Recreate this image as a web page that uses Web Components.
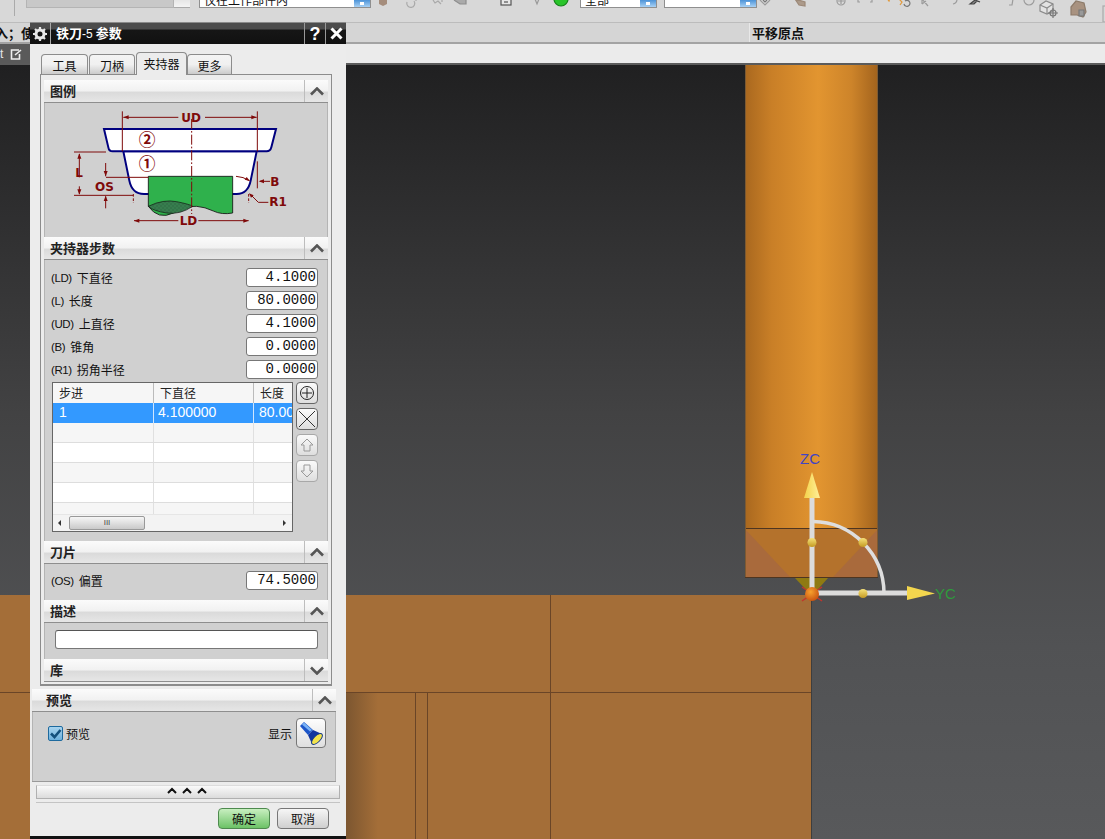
<!DOCTYPE html>
<html lang="zh">
<head>
<meta charset="utf-8">
<title>铁刀-5 参数</title>
<style>
  html, body { margin: 0; padding: 0; }
  body {
    width: 1105px; height: 839px; overflow: hidden; position: relative;
    font: 12px "Liberation Sans", "Noto Sans CJK SC", sans-serif; color: #111;
    display: flex; flex-direction: column;
  }
</style>
</head>
<body>
<cad-toolbar></cad-toolbar>
<cad-header></cad-header>
<cad-strip></cad-strip>
<cad-viewport></cad-viewport>

<tool-dialog heading="铁刀-5 参数">
  <dlg-tabs></dlg-tabs>
  <div slot="panel">
    <dlg-section heading="图例" h="134"><legend-figure></legend-figure></dlg-section>
    <dlg-section heading="夹持器步数" h="281">
      <param-row code="(LD)" name="下直径" value="4.1000"></param-row>
      <param-row code="(L)" name="长度" value="80.0000"></param-row>
      <param-row code="(UD)" name="上直径" value="4.1000"></param-row>
      <param-row code="(B)" name="锥角" value="0.0000"></param-row>
      <param-row code="(R1)" name="拐角半径" value="0.0000"></param-row>
      <step-table></step-table>
    </dlg-section>
    <dlg-section heading="刀片" h="36" pad="5">
      <param-row code="(OS)" name="偏置" value="74.5000"></param-row>
    </dlg-section>
    <dlg-section heading="描述" h="36" pad="7">
      <desc-field></desc-field>
    </dlg-section>
    <dlg-section heading="库" closed></dlg-section>
  </div>
  <dlg-section slot="preview" heading="预览" h="69" inset="14"><preview-row></preview-row></dlg-section>
</tool-dialog>

<script>
class CadToolbar extends HTMLElement {
  connectedCallback() {
    this.attachShadow({mode: 'open'}).innerHTML = `
      <style>
        :host { display: flex; flex: none; height: 22px; background: #d8d8d8; overflow: hidden; box-sizing: border-box; }
        .sep { width: 1px; height: 16px; background: #aaa; margin-left: 14px; }
        .grey { width: 148px; height: 8px; margin-left: 11px; background: #c8c8c8; border: 1px solid #b4b4b4; border-top: 0; box-sizing: border-box; }
        .greybtn { width: 16px; height: 8px; background: linear-gradient(#e6e6e6, #f4f4f4); border-bottom: 1px solid #aaa; box-sizing: border-box; margin-right: 9px; }
        .combo { height: 8px; background: #fff; border: 1px solid #8f8f8f; border-top: 0; box-sizing: border-box; display: flex; overflow: hidden; flex: none; }
        .combo span { flex: 1; font: 12px/12px "Noto Sans CJK SC", sans-serif; margin-top: -6px; padding-left: 4px; color: #111; white-space: nowrap; overflow: hidden; }
        .combo i { width: 16px; background: linear-gradient(#4c93d8, #a9d2f5); position: relative; }
        .combo i::after { content: ""; position: absolute; left: 6px; top: 2px; width: 4px; height: 3px; background: #fff; }
        svg { flex: none; display: block; }
      </style>
      <div class="sep"></div>
      <div class="grey"></div><div class="greybtn"></div>
      <div class="combo" style="width:172px"><span>仅在工作部件内</span><i></i></div>
      <svg width="209" height="22" fill="none" stroke="#a9a9a9" stroke-width="1.2">
        <path d="M8 -1h8v5l-4 2-4-2z" fill="#a58d7c" stroke="none"/>
        <path d="M36 2a4 4 0 1 0 7-1" /><path d="M45 -1v2"/>
        <path d="M62 0l2 3 3-2 3 3"/><path d="M71 -1v3"/>
        <path d="M83 0l6 4h6v-5" fill="#aaa" stroke="#8e8e8e"/>
        <rect x="130" y="-1" width="10" height="6" stroke="#555" fill="#e6e6e6"/><path d="M133 2h4" stroke="#555"/>
        <path d="M164 -1l2 5 2-5" stroke="#999"/>
        <circle cx="190" cy="-1" r="7" fill="#29c42a" stroke="#16811a"/>
      </svg>
      <div class="combo" style="width:77px"><span>全部</span><i></i></div>
      <div style="width:7px;flex:none"></div>
      <div class="combo" style="width:93px"><span></span><i></i></div>
      <svg width="348" height="22" fill="none" stroke="#9b9b9b" stroke-width="1.2">
        <path d="M3 0l5 5 5-5"/><path d="M6 0l2 2 2-2" stroke="#777"/>
        <path d="M38 -1l10 3v4l-6-1z" fill="#ac9a8a" stroke="#9c8978"/>
        <circle cx="84" cy="1" r="4"/><path d="M84 -2v6M81 1h6" />
        <path d="M101 -1v3h2M115 -1v3h-2"/>
        <path d="M131 1l2-2M131 1h2" stroke="#e29a3c"/><path d="M142 -1l3 3-2 3" stroke="#e29a3c"/><path d="M148 1a3 3 0 1 1-1 3" stroke="#777"/>
        <path d="M165 -1l6 7M165 -1v5M165 4l4-3" />
        <path d="M196 4a5 5 0 0 0 4-5"/>
        <path d="M213 4l5-4 5 2-3-1-3 3z" fill="#8c8c8c" stroke="#444"/>
        <path d="M252 5h3l1-6h3"/>
        <circle cx="272" cy="0" r="5"/>
        <path d="M283 5l6-4 7 3v7l-6 3-7-3z" fill="#e3e3e3" stroke="#8b8b8b"/><path d="M283 5l7 3 6-4M290 8v6" stroke="#8b8b8b"/>
        <circle cx="296" cy="13" r="3" stroke="#777"/><path d="M296 8v10M291 13h10" stroke="#777"/>
        <path d="M314 7l5-6 8 2 2 9-3 5-6-2-6 0z" fill="#a89280" stroke="#8d7b6a"/><path d="M322 10h5v6h-5z" fill="#999" stroke="#777"/>
        <rect x="346" y="6" width="6" height="16" stroke="#aaa"/>
      </svg>`;
  }
}
customElements.define('cad-toolbar', CadToolbar);

class CadHeader extends HTMLElement {
  connectedCallback() {
    this.attachShadow({mode: 'open'}).innerHTML = `
      <style>
        :host { display: flex; flex: none; height: 22px; background: #d5d5d5; border-top: 1px solid #bcbcbc; border-bottom: 2px solid #a3a3a3; box-sizing: border-box; font: bold 13px "Noto Sans CJK SC", sans-serif; color: #111; line-height: 19px; }
        .left { width: 750px; box-sizing: border-box; border-right: 1px solid #e8e8e8; white-space: nowrap; overflow: hidden; }
        .left span { margin-left: -5px; display: inline-block; }
        .right { padding-left: 2px; }
      </style>
      <div class="left"><span>入；使</span></div>
      <div class="right">平移原点</div>`;
  }
}
customElements.define('cad-header', CadHeader);

class CadStrip extends HTMLElement {
  connectedCallback() {
    this.attachShadow({mode: 'open'}).innerHTML = `
      <style>
        :host { display: flex; flex: none; height: 21px; background: #ebebeb; border-bottom: 2px solid #5b5b5b; box-sizing: border-box; }
        .left { width: 30px; background: #5a5a5a; color: #e6e6e6; font: 12px "Liberation Sans", sans-serif; display: flex; align-items: center; gap: 7px; }
      </style>
      <div class="left"><span>t</span><svg width="12" height="12" fill="none" stroke="#eee" stroke-width="1.6"><path d="M9 2H1.500v9h8V6"/><path d="M5 7l6-5" /></svg></div>`;
  }
}
customElements.define('cad-strip', CadStrip);

class CadViewport extends HTMLElement {
  connectedCallback() {
    // svg coordinates are page coordinates, shifted up by the 65px of bars above
    this.attachShadow({mode: 'open'}).innerHTML = `
      <style>
        :host { display: block; flex: 1; min-height: 0; overflow: hidden; }
        svg { display: block; }
        text { font-family: "Liberation Sans", sans-serif; font-size: 15px; }
      </style>
      <svg width="1105" height="774" viewBox="0 65 1105 774">
        <defs>
          <linearGradient id="bg" x1="0" y1="0" x2="0" y2="1">
            <stop offset="0" stop-color="#202021"/><stop offset=".45" stop-color="#424243"/><stop offset=".75" stop-color="#515254"/><stop offset="1" stop-color="#58595b"/>
          </linearGradient>
          <linearGradient id="cyl" x1="0" y1="0" x2="1" y2="0">
            <stop offset="0" stop-color="#a9681f"/><stop offset=".2" stop-color="#c97f27"/><stop offset=".55" stop-color="#e29530"/><stop offset=".8" stop-color="#cd842a"/><stop offset="1" stop-color="#a2631d"/>
          </linearGradient>
          <linearGradient id="shade" x1="0" y1="0" x2="1" y2="0">
            <stop offset="0" stop-color="#7c5630"/><stop offset="1" stop-color="#a46e38"/>
          </linearGradient>
          <linearGradient id="ball" x1="0" y1="0" x2="0" y2="1">
            <stop offset="0" stop-color="#f6e27a"/><stop offset="1" stop-color="#c49a22"/>
          </linearGradient>
          <linearGradient id="cone" x1="0" y1="0" x2="1" y2="0">
            <stop offset="0" stop-color="#f4d24a"/><stop offset="1" stop-color="#fff09a"/>
          </linearGradient>
          <radialGradient id="org" cx=".4" cy=".35" r=".7">
            <stop offset="0" stop-color="#f7a12e"/><stop offset="1" stop-color="#c8500f"/>
          </radialGradient>
        </defs>
        <rect x="0" y="65" width="1105" height="774" fill="url(#bg)"/>
        <rect x="0" y="595" width="811" height="244" fill="#a46e38"/>
        <rect x="346" y="692" width="32" height="147" fill="url(#shade)"/>
        <g stroke="#6a4527" stroke-width="1" fill="none">
          <path d="M0 692.500H811M550.500 595V839M415.500 692V839M427.500 692V839"/>
          <path d="M811.500 595V839" stroke="#3e3e3e"/>
        </g>
        <rect x="745" y="65" width="133" height="464" fill="url(#cyl)"/>
        <rect x="745" y="528" width="133" height="49" fill="#b4722c"/>
        <path d="M745 529L790 577H745ZM878 529L833 577H878Z" fill="#a96a3c"/>
        <path d="M745 528.500H878M745 577.500H878" stroke="#4e3520" stroke-width="1"/>
        <path d="M745.500 65V577M877.500 65V577" stroke="#7d5a32" stroke-width="1"/>
        <path d="M795 578H828L812 596Z" fill="#8f7a12"/>
        <path d="M802 587L822 601M822 587L802 601" stroke="#c2352d" stroke-width="1.500"/>

        <path d="M812 497V594M812 593H910" stroke="#dcdcdc" stroke-width="5" fill="none"/>
        <path d="M813 521.500A72 72 0 0 1 884 593" stroke="#dedede" stroke-width="3.500" fill="none"/>
        <path d="M812 472L820 498H804Z" fill="url(#cone)"/>
        <path d="M907 586L935 593.500L907 600Z" fill="#f3d64e"/>
        <circle cx="812" cy="542.500" r="4.500" fill="url(#ball)"/>
        <circle cx="863" cy="542.500" r="4.500" fill="url(#ball)"/>
        <circle cx="863" cy="593.500" r="4.500" fill="url(#ball)"/>
        <circle cx="812" cy="594" r="7" fill="url(#org)"/>
        <text x="800" y="464" fill="#4144c4">ZC</text>
        <text x="935" y="599" fill="#2f9a3c">YC</text>
      </svg>`;
  }
}
customElements.define('cad-viewport', CadViewport);

class ToolDialog extends HTMLElement {
  connectedCallback() {
    this.attachShadow({mode: 'open'}).innerHTML = `
      <style>
        :host { display: flex; flex-direction: column; position: absolute; left: 30px; top: 22px; width: 316px; height: 817px; background: #ececec; box-sizing: border-box; }
        .title { height: 22px; flex: none; display: flex; align-items: stretch; color: #fff; background: linear-gradient(#4c4c4c 0, #4c4c4c 30%, #161616 32%, #111 100%); border-top: 1px solid #8a8a8a; box-sizing: border-box; }
        .gear { width: 20px; display: flex; align-items: center; justify-content: center; border-right: 1px solid #aaa; }
        .cap { flex: 1; padding-left: 5px; font: bold 13px/20px "Noto Sans CJK SC", sans-serif; }
        .cap span { font: 12px "Liberation Sans", sans-serif; }
        .tbtn { width: 20px; border-left: 1px solid #999; display: flex; align-items: center; justify-content: center; font: bold 18px/20px "Liberation Sans", sans-serif; }
        .frame { margin: 30px 0 0 10px; width: 292px; height: 612px; border: 1px solid #8c8c8c; border-bottom-width: 2px; box-sizing: border-box; padding: 5px 3px; display: flex; flex-direction: column; position: relative; }
        ::slotted(dlg-tabs) { position: absolute; left: 11px; top: 30px; }
        .preview { margin: 3px 0 0 2px; width: 304px; flex: none; border-bottom: 1px solid #999; }
        .more { margin: 3px 0 0 6px; width: 304px; height: 14px; flex: none; border: 1px solid #b0b0b0; border-top-color: #ddd; box-sizing: border-box; background: linear-gradient(#fafafa, #dcdcdc); text-align: center; line-height: 9px; }
        .rule { margin: 3px 0 0 6px; width: 304px; height: 1px; background: #c4c4c4; flex: none; }
        .foot { display: flex; justify-content: flex-end; gap: 7px; margin: 5px 17px 0 0; flex: none; }
        button { all: unset; width: 52px; height: 21px; box-sizing: border-box; border: 1px solid #777; border-radius: 4px; text-align: center; font: 12px/19px "Noto Sans CJK SC", sans-serif; color: #111; background: linear-gradient(#f6f6f6, #cfcfcf); }
        button.ok { background: linear-gradient(#c8efc0, #6cc266); border-color: #4e8a4e; }
        .edge { position: absolute; left: 0; right: 0; bottom: 0; height: 3px; background: #111; }
      </style>
      <div class="title">
        <div class="gear"><svg width="16" height="16" viewBox="0 0 16 16"><circle cx="8" cy="8" r="4" fill="none" stroke="#e8e8e8" stroke-width="3"/><path d="M8 1v3M8 12v3M1 8h3M12 8h3M3 3l2 2M11 11l2 2M13 3l-2 2M5 11l-2 2" stroke="#e8e8e8" stroke-width="2.200"/></svg></div>
        <div class="cap">铁刀<span>-5</span> 参数</div>
        <div class="tbtn">?</div>
        <div class="tbtn"><svg width="13" height="13"><path d="M1.500 1.500l10 10M11.500 1.500l-10 10" stroke="#fff" stroke-width="3"/></svg></div>
      </div>
      <slot></slot>
      <div class="frame"><slot name="panel"></slot></div>
      <div class="preview"><slot name="preview"></slot></div>
      <div class="more"><svg width="42" height="9" fill="none" stroke="#111" stroke-width="2"><path d="M1 7l4-4 4 4M16 7l4-4 4 4M31 7l4-4 4 4"/></svg></div>
      <div class="rule"></div>
      <div class="foot"><button class="ok">确定</button><button>取消</button></div>
      <div class="edge"></div>`;
  }
}
customElements.define('tool-dialog', ToolDialog);

class DlgTabs extends HTMLElement {
  connectedCallback() {
    this.attachShadow({mode: 'open'}).innerHTML = `
      <style>
        :host { display: flex; align-items: flex-end; height: 22px; z-index: 2; font: 12px "Noto Sans CJK SC", sans-serif; color: #111; }
        div { height: 20px; box-sizing: border-box; border: 1px solid #8c8c8c; border-bottom: 0; border-radius: 4px 4px 0 0; text-align: center; line-height: 21px; margin-right: 1px; background: linear-gradient(#f4f4f4 0, #f0f0f0 50%, #cbcbcb 100%); }
        .on { height: 23px; background: #ececec; margin-right: 0; line-height: 22px; position: relative; top: 1px; }
      </style>
      <div style="width:47px">工具</div><div style="width:46px">刀柄</div><div class="on" style="width:51px">夹持器</div><div style="width:45px">更多</div>`;
  }
}
customElements.define('dlg-tabs', DlgTabs);

class DlgSection extends HTMLElement {
  connectedCallback() {
    const h = this.getAttribute('h');
    const pad = this.getAttribute('pad') || 6;
    const inset = this.getAttribute('inset') || 6;
    const closed = this.hasAttribute('closed');
    const arrow = closed ? 'M1 1.500l6 6 6-6' : 'M1 7.500l6-6 6 6';
    this.attachShadow({mode: 'open'}).innerHTML = `
      <style>
        :host { display: block; flex: none; }
        .head { display: flex; height: 23px; box-sizing: border-box; background: linear-gradient(#fbfbfb 0, #f1f1f1 50%, #dadada 55%, #e6e6e6 100%); border-bottom: 1px solid #8e8e8e; font: bold 13px/22px "Noto Sans CJK SC", sans-serif; color: #222; }
        .lbl { flex: 1; padding-left: ${inset}px; }
        .arr { width: 23px; border-left: 1px solid #bdbdbd; display: flex; align-items: center; justify-content: center; }
        .body { height: ${h}px; box-sizing: border-box; padding-top: ${pad}px; background: #d0d0d0; border: 1px solid #b4b4b4; border-top: 0; border-bottom: 0; }
        .body.none { display: none; }
      </style>
      <div class="head">
        <div class="lbl">${this.getAttribute('heading')}</div>
        <div class="arr"><svg width="14" height="9" fill="none" stroke="#555" stroke-width="2.600"><path d="${arrow}"/></svg></div>
      </div>
      <div class="body ${closed ? 'none' : ''}"><slot></slot></div>`;
  }
}
customElements.define('dlg-section', DlgSection);

class LegendFigure extends HTMLElement {
  connectedCallback() {
    const red = '#7f0a0a';
    // drawn in the 3x units the drawing was measured in
    this.attachShadow({mode: 'open'}).innerHTML = `
      <style>
        :host { display: block; margin: -6px 0 0 0; }
        svg { display: block; }
        text { font: bold 36px "DejaVu Sans", sans-serif; fill: ${red}; }
        .c { font: bold 50px "Noto Sans CJK SC", sans-serif; }
      </style>
      <svg width="282" height="134" viewBox="15 12 846 402">
        <defs>
          <pattern id="hatch" width="4" height="4" patternUnits="userSpaceOnUse"><rect width="4" height="4" fill="#3c8a55"/><path d="M0 4L4 0" stroke="#2a5a3c" stroke-width="1.500"/></pattern>
        </defs>
        <path d="M250 157L268 245Q276 285 312 285H590Q624 285 632 245L650 157Z" fill="#fff" stroke="#00007f" stroke-width="6"/>
        <path d="M192 90H708L694 145Q691 157 680 157H218Q207 157 205 145Z" fill="#fff" stroke="#00007f" stroke-width="6"/>
        <path d="M325 232H578V342Q545 348 520 336T470 322T400 342T325 322Z" fill="#2fb14c" stroke="#111" stroke-width="2.500"/>
        <path d="M325 322Q370 300 410 308T458 322Q420 348 380 342T325 322Z" fill="url(#hatch)" stroke="#111" stroke-width="2"/>
        <g stroke="${red}" stroke-width="3" fill="none">
          <path d="M455 60V345" stroke-dasharray="30 6 5 6"/>
          <path d="M247 37V157M652 37V157"/>
          <path d="M250 55H415M495 55H650"/>
          <path d="M102 159H198M102 289H280M198 235H325"/>
          <path d="M118 165V235M118 262V285"/>
          <path d="M197 192V232M197 292V328"/>
          <path d="M280 285V312M626 285V312" stroke-dasharray="8 5"/>
          <path d="M282 365H415M475 365H626"/>
          <path d="M652 187V268M660 247H690"/>
          <path d="M588 232Q610 233 628 245"/>
          <path d="M630 285L655 310H685"/>
        </g>
        <g fill="${red}">
          <path d="M250 55l16-6v12zM650 55l-16-6v12z"/>
          <path d="M118 163l-6 16h12zM118 287l-6-16h12z"/>
          <path d="M197 232l-6-16h12zM197 290l-6 16h12z"/>
          <path d="M282 365l16-6v12zM626 365l-16-6v12z"/>
          <path d="M656 247l16-6v12z"/>
          <path d="M630 246l-16-4 6-8z"/>
          <path d="M627 283l14 6-8 7z"/>
        </g>
        <text x="424" y="68">UD</text>
        <text x="106" y="235">L</text>
        <text x="165" y="276">OS</text>
        <text x="691" y="262">B</text>
        <text x="688" y="322">R1</text>
        <text x="419" y="378">LD</text>
        <text class="c" x="296" y="140">②</text>
        <text class="c" x="296" y="212">①</text>
      </svg>`;
  }
}
customElements.define('legend-figure', LegendFigure);

class ParamRow extends HTMLElement {
  connectedCallback() {
    this.attachShadow({mode: 'open'}).innerHTML = `
      <style>
        :host { display: flex; align-items: center; height: 23px; padding: 0 9px 0 6px; font: 12px "Noto Sans CJK SC", sans-serif; color: #111; }
        .code { font: 11.500px "Liberation Sans", sans-serif; margin-right: 5px; letter-spacing: -.4px; }
        .name { flex: 1; }
        .val { width: 72px; height: 19px; box-sizing: border-box; background: #fff; border: 1px solid #777; border-radius: 3px; text-align: right; padding-right: 1px; font: 14px/17px "Liberation Mono", "DejaVu Sans Mono", monospace; }
      </style>
      <span class="code">${this.getAttribute('code')}</span>
      <span class="name">${this.getAttribute('name')}</span>
      <div class="val">${this.getAttribute('value')}</div>`;
  }
}
customElements.define('param-row', ParamRow);

class StepTable extends HTMLElement {
  connectedCallback() {
    const empty = '<div class="r"><i></i><i></i><i></i></div>'.repeat(4);
    this.attachShadow({mode: 'open'}).innerHTML = `
      <style>
        :host { display: flex; gap: 3px; margin: 1px 0 0 7px; }
        .box { width: 241px; height: 150px; box-sizing: border-box; border: 1px solid #666; background: #fff; display: flex; flex-direction: column; overflow: hidden; }
        .r { display: grid; grid-template-columns: 101px 100px 38px; height: 20px; flex: none; box-sizing: border-box; border-bottom: 1px solid #ddd; font: 14px/19px "Liberation Sans", sans-serif; overflow: hidden; white-space: nowrap; }
        .r:nth-child(odd of .r) { background: #f6f6f6; }
        .r i { font-style: normal; border-right: 1px solid #e0e0e0; padding-left: 4px; overflow: hidden; }
        .r i:first-child { padding-left: 6px; }
        .r i:last-child { border-right: 0; padding-left: 5px; }
        .r.head { background: linear-gradient(#fafafa, #dcdcdc); border-bottom: 0; font: 12px/20px "Noto Sans CJK SC", sans-serif; color: #222; }
        .r.head i { border-right-color: #bbb; padding-left: 6px; }
        .r.sel { background: #3399ff; color: #fff; border-bottom: 0; }
        .r.sel i { border-right-color: #cfe6ff; }
        .r.last { height: 11px; border: 0; background: #fff; }
        .bar { height: 17px; flex: none; box-sizing: border-box; border-top: 1px solid #e6e6e6; background: #f3f3f3; display: flex; align-items: center; padding: 0 5px; position: relative; }
        .thumb { width: 76px; height: 14px; margin-left: 8px; box-sizing: border-box; border: 1px solid #999; border-radius: 2px; background: linear-gradient(#f6f6f6, #c9c9c9); text-align: center; font: 8px/12px "Liberation Sans", sans-serif; color: #444; }
        .tri { width: 0; height: 0; border: 3px solid transparent; }
        .tl { border-right-color: #333; margin-left: -3px; }
        .tr { border-left-color: #333; position: absolute; right: 3px; top: 5px; }
        .btns { display: flex; flex-direction: column; gap: 4px; }
        .b { width: 22px; height: 22px; box-sizing: border-box; border: 1px solid #666; border-radius: 4px; background: linear-gradient(#fafafa, #dedede); display: flex; align-items: center; justify-content: center; }
        .b.off { border-color: #a8a8a8; }
      </style>
      <div class="box">
        <div class="r head"><i>步进</i><i>下直径</i><i>长度</i></div>
        <div class="r sel"><i>1</i><i>4.100000</i><i>80.0000</i></div>
        ${empty}
        <div class="r last"><i></i><i></i><i></i></div>
        <div class="bar"><div class="tri tl"></div><div class="thumb">III</div><div class="tri tr"></div></div>
      </div>
      <div class="btns">
        <div class="b"><svg width="16" height="16" fill="none" stroke="#222"><circle cx="8" cy="8" r="6.500"/><path d="M8 3v10M3 8h10"/></svg></div>
        <div class="b"><svg width="18" height="18" fill="none" stroke="#333"><path d="M1 1l16 16M17 1L1 17"/></svg></div>
        <div class="b off"><svg width="14" height="14" fill="none" stroke="#999"><path d="M7 1L1 7h3v6h6V7h3z"/></svg></div>
        <div class="b off"><svg width="14" height="14" fill="none" stroke="#999"><path d="M7 13L1 7h3V1h6v6h3z"/></svg></div>
      </div>`;
  }
}
customElements.define('step-table', StepTable);

class DescField extends HTMLElement {
  connectedCallback() {
    this.attachShadow({mode: 'open'}).innerHTML = `
      <style>
        :host { display: block; height: 19px; margin: 0 9px 0 10px; box-sizing: border-box; background: #fff; border: 1px solid #777; border-top-color: #555; border-radius: 3px; }
      </style>`;
  }
}
customElements.define('desc-field', DescField);

class PreviewRow extends HTMLElement {
  connectedCallback() {
    this.attachShadow({mode: 'open'}).innerHTML = `
      <style>
        :host { display: flex; align-items: center; padding: 0 9px 0 15px; font: 12px "Noto Sans CJK SC", sans-serif; color: #111; }
        .chk { width: 15px; height: 15px; box-sizing: border-box; border: 1px solid #1e6a9e; border-radius: 2px; background: linear-gradient(#a8d4ef, #6db0dc); display: flex; align-items: center; justify-content: center; margin-right: 3px; }
        .txt { flex: 1; }
        .show { width: 30px; height: 30px; box-sizing: border-box; border: 1px solid #777; border-radius: 4px; background: linear-gradient(#fdfdfd, #dfdfdf); margin-left: 4px; }
        svg { display: block; }
      </style>
      <div class="chk"><svg width="13" height="13" fill="none" stroke="#14507c" stroke-width="2.600"><path d="M2 6.500l3.500 3.500 6-7"/></svg></div>
      <span class="txt">预览</span>
      <span>显示</span>
      <div class="show"><svg width="28" height="28"><path d="M3 7L7 3L16 11L11 16Z" fill="#1c55c8"/><path d="M5 5.500L7 3.500L15 11L13 12.500Z" fill="#79b2f5"/><path d="M11 16L16 11L25 15L15 25Z" fill="#12369e"/><ellipse cx="20" cy="20" rx="7" ry="3.200" transform="rotate(-45 20 20)" fill="#f2e34c" stroke="#153a8a"/></svg></div>`;
  }
}
customElements.define('preview-row', PreviewRow);
</script>
</body>
</html>
